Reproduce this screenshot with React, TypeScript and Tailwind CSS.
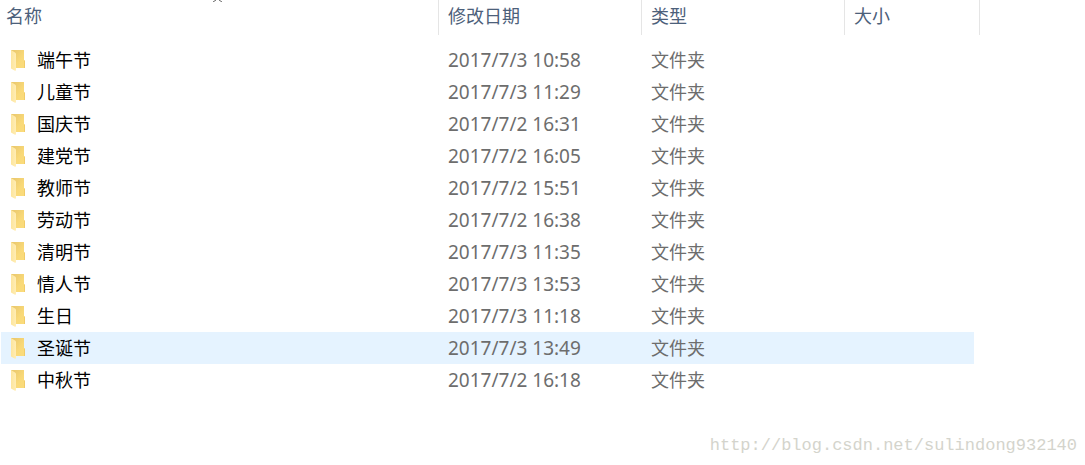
import React from "react";

const FOLDERS = [
  { name: "端午节", date: "2017/7/3 10:58" },
  { name: "儿童节", date: "2017/7/3 11:29" },
  { name: "国庆节", date: "2017/7/2 16:31" },
  { name: "建党节", date: "2017/7/2 16:05" },
  { name: "教师节", date: "2017/7/2 15:51" },
  { name: "劳动节", date: "2017/7/2 16:38" },
  { name: "清明节", date: "2017/7/3 11:35" },
  { name: "情人节", date: "2017/7/3 13:53" },
  { name: "生日", date: "2017/7/3 11:18" },
  { name: "圣诞节", date: "2017/7/3 13:49", active: true },
  { name: "中秋节", date: "2017/7/2 16:18" },
];

const COLUMNS = ["名称", "修改日期", "类型", "大小"];

const FolderIcon: React.FC = () => (
  <svg width="16" height="22" viewBox="0 0 16 22" className="shrink-0" aria-hidden="true">
    <defs>
      <linearGradient id="folder-back" x1="0" y1="0" x2="1" y2="1">
        <stop offset="0" stopColor="#e8c66c" />
        <stop offset="0.6" stopColor="#f9d978" />
        <stop offset="1" stopColor="#fbdc7c" />
      </linearGradient>
      <linearGradient id="folder-front" x1="0" y1="0" x2="1" y2="0">
        <stop offset="0" stopColor="#fde59c" />
        <stop offset="1" stopColor="#ffedb5" />
      </linearGradient>
    </defs>
    <path d="M1 1H14V11L15 12V19H1Z" fill="url(#folder-back)" />
    <path d="M14 11L15 12V19H14Z" fill="#f0cb68" />
    <path d="M1 1L5 3.5Q6 4 6 5V21Q6 22 5 21.8L1 19.5Z" fill="url(#folder-front)" />
  </svg>
);

const App: React.FC = () => {
  return (
    <main className="relative bg-white font-['Noto_Sans','Noto_Sans_CJK_SC',sans-serif] text-lg">
      <table className="w-full max-w-[980px] table-fixed border-separate border-spacing-0 text-left">
        <colgroup>
          <col className="w-[439px]" />
          <col className="w-[203px]" />
          <col className="w-[203px]" />
          <col />
        </colgroup>
        <thead>
          <tr>
            {COLUMNS.map((label, idx) => (
              <th key={label} scope="col" className="p-0 pb-[9px] font-normal">
                <div
                  className={`relative h-[35px] border-r border-[#e5e5e5] leading-8 text-[#4c607a] ${
                    idx === 0 ? "pl-[6px]" : "pl-[9px]"
                  }`}
                >
                  {label}
                  {/* Sort arrow */}
                  {idx === 0 && (
                    <svg
                      width="12"
                      height="2"
                      viewBox="0 0 12 2"
                      className="absolute top-0 left-1/2 -translate-x-1/2"
                      aria-hidden="true"
                    >
                      <path d="M3 0L0 2M6 0L9 2" stroke="#666666" fill="none" />
                    </svg>
                  )}
                </div>
              </th>
            ))}
          </tr>
        </thead>
        <tbody>
          {FOLDERS.map((folder) => {
            const bg = folder.active ? "bg-[#e5f3ff]" : "hover:bg-[#e5f3ff]";
            return (
              <tr key={folder.name} className="text-[#6d6d6d]">
                <td className={`h-8 border-l border-transparent bg-clip-padding p-0 pl-[9px] text-black ${bg}`}>
                  <div className="flex h-8 items-center gap-[11px]">
                    <FolderIcon />
                    <span className="leading-8">{folder.name}</span>
                  </div>
                </td>
                <td className={`h-8 p-0 pl-[9px] text-[19px] leading-8 ${bg}`}>{folder.date}</td>
                <td className={`h-8 p-0 pl-[9px] leading-8 ${bg}`}>文件夹</td>
                <td className={`h-8 border-r-6 border-transparent bg-clip-padding p-0 ${bg}`}></td>
              </tr>
            );
          })}
        </tbody>
      </table>

      {/* Watermark */}
      <p className="mt-[38px] pr-2 text-right font-['Liberation_Mono',monospace] text-[17px] leading-6 text-[#d4d4cc]">
        http://blog.csdn.net/sulindong932140
      </p>
    </main>
  );
};

export default App;
